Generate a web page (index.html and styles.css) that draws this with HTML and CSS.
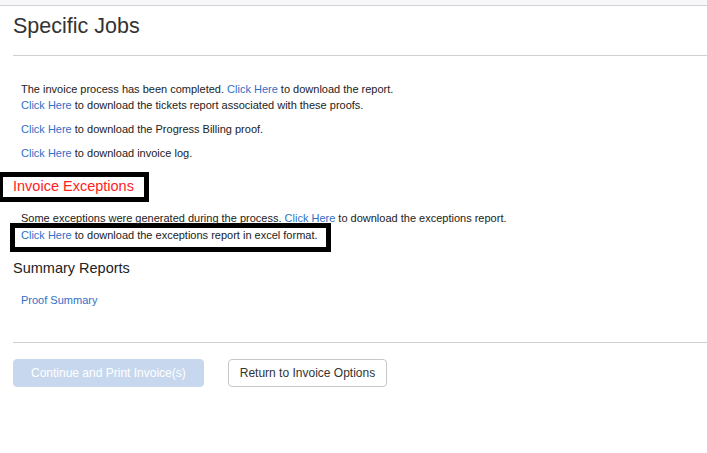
FILE: index.html
```html
<!DOCTYPE html>
<html lang="en">
<head>
    <meta charset="UTF-8">
    <meta name="viewport" content="width=device-width, initial-scale=1.0">
    <title>Specific Jobs</title>
    <link rel="stylesheet" href="styles.css">
</head>
<body>
    <div class="topbar"></div>

    <section class="page">
        <h1 class="page-title">Specific Jobs</h1>
        <hr class="rule">

        <div class="messages">
            <p>The invoice process has been completed. <a href="#">Click Here</a> to download the report.<br>
                <a href="#">Click Here</a> to download the tickets report associated with these proofs.</p>
            <p><a href="#">Click Here</a> to download the Progress Billing proof.</p>
            <p><a href="#">Click Here</a> to download invoice log.</p>
        </div>

        <h2 class="exceptions-title">Invoice Exceptions</h2>
        <div class="messages">
            <p class="exceptions-note">Some exceptions were generated during the process. <a href="#">Click Here</a> to download the exceptions report.</p>
            <p class="excel-line"><a href="#">Click Here</a> to download the exceptions report in excel format.</p>
        </div>

        <h2 class="section-title">Summary Reports</h2>
        <div class="messages">
            <p><a href="#">Proof Summary</a></p>
        </div>

        <hr class="rule rule-bottom">

        <div class="actions">
            <button class="btn btn-primary" disabled>Continue and Print Invoice(s)</button>
            <button class="btn btn-default">Return to Invoice Options</button>
        </div>
    </section>
</body>
</html>
```
FILE: styles.css
```css
* {
    margin: 0;
    padding: 0;
    box-sizing: border-box;
}

body {
    font-family: Arial, "Liberation Sans", sans-serif;
    background-color: #fff;
    color: #222;
}

a {
    color: #2f6fc6;
    text-decoration: none;
}

.topbar {
    height: 6px;
    background-color: #f7f7f9;
    border-bottom: 1px solid #d2d2d2;
}

.page {
    padding-left: 13px;
}

.page-title {
    margin-top: 8px;
    font-size: 21.5px;
    line-height: 24px;
    font-weight: normal;
    color: #333;
}

.rule {
    border: 0;
    border-top: 1px solid #cfcfcf;
    margin-top: 17px;
}

.rule-bottom {
    margin-top: 34px;
}

.messages {
    padding-left: 8px;
    font-size: 11px;
    line-height: 16px;
}

.rule + .messages {
    margin-top: 25px;
}

.messages p {
    margin-bottom: 8px;
}

.exceptions-title {
    width: fit-content;
    margin: 11px 0 8px -15px;
    padding: 0 10px 2px;
    border: 5px solid #000;
    font-size: 14.5px;
    line-height: 18px;
    font-weight: normal;
    color: #f22;
}

.messages .exceptions-note {
    margin-bottom: 0;
}

.excel-line {
    width: fit-content;
    margin: -3px 0 0 -11px;
    padding: 0 8px 5px 6px;
    border: 5px solid #000;
    line-height: 14px;
}

.section-title {
    margin: 8px 0 16px;
    font-size: 14.5px;
    line-height: 16px;
    font-weight: normal;
    color: #222;
}

.actions {
    display: flex;
    gap: 24px;
    margin-top: 16px;
}

.btn {
    height: 28px;
    font-family: Arial, "Liberation Sans", sans-serif;
    font-size: 12px;
    border-radius: 4px;
    cursor: pointer;
}

.btn-primary {
    padding: 0 17px;
    background-color: #c7d8ee;
    border: 1px solid #c7d8ee;
    color: #fff;
}

.btn-default {
    padding: 0 11px;
    background-color: #fff;
    border: 1px solid #c8c8c8;
    color: #333;
}
```
